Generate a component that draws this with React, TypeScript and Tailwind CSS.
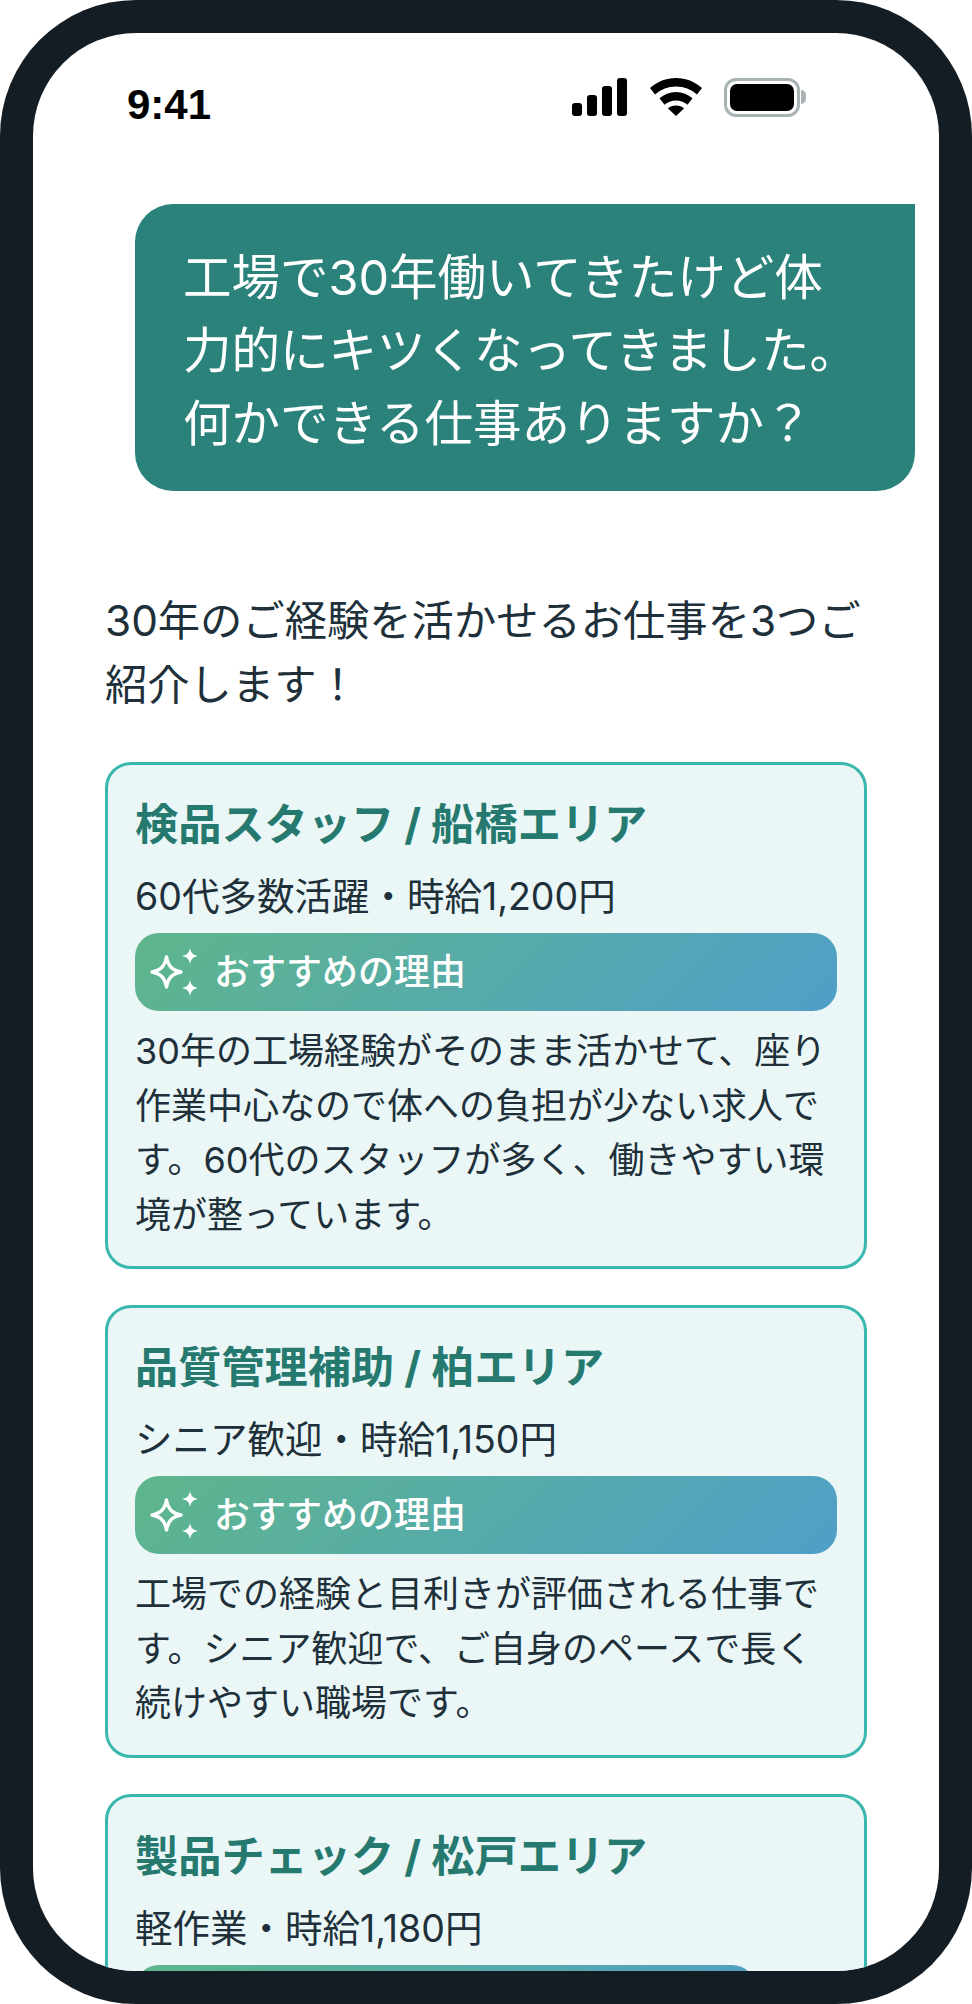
const font = { fontFamily: 'Inter, "Noto Sans CJK JP", sans-serif' };

interface Job {
  title: string;
  meta: string;
  reason: string[];
  bandClass: string;
  clipped?: boolean;
}

const jobs: Job[] = [
  {
    title: "検品スタッフ / 船橋エリア",
    meta: "60代多数活躍・時給1,200円",
    reason: [
      "30年の工場経験がそのまま活かせて、座り",
      "作業中心なので体への負担が少ない求人で",
      "す。60代のスタッフが多く、働きやすい環",
      "境が整っています。",
    ],
    bandClass: "w-full",
  },
  {
    title: "品質管理補助 / 柏エリア",
    meta: "シニア歓迎・時給1,150円",
    reason: [
      "工場での経験と目利きが評価される仕事で",
      "す。シニア歓迎で、ご自身のペースで長く",
      "続けやすい職場です。",
    ],
    bandClass: "w-full",
  },
  {
    // only the top edge of the band shows above the bezel
    title: "製品チェック / 松戸エリア",
    meta: "軽作業・時給1,180円",
    reason: [],
    bandClass: "w-[621px]",
    clipped: true,
  },
];

function Sparkles() {
  return (
    <svg viewBox="0 0 50 50" className="w-[50px] h-[50px] shrink-0" fill="none">
      <path d="M17.500 10c1.700 9 5.500 13.300 14.500 15-9 1.700-12.800 6-14.500 15-1.700-9-5.500-13.300-14.500-15 9-1.700 12.800-6 14.500-15z" stroke="#fff" strokeWidth="3.400" strokeLinejoin="round" />
      <path d="M41 1c1 5.200 3 7 8 8-5 1-7 2.800-8 8-1-5.200-3-7-8-8 5-1 7-2.800 8-8z" fill="#fff" />
      <path d="M41 33c1 5.200 3 7 8 8-5 1-7 2.800-8 8-1-5.200-3-7-8-8 5-1 7-2.800 8-8z" fill="#fff" />
    </svg>
  );
}

function StatusBar() {
  return (
    <div className="flex items-center justify-between h-[108px] pt-[10px] pl-[94px] pr-[133px] shrink-0 box-content">
      <span className="mt-[16px] text-[42px] font-bold leading-none text-black" style={{ fontFamily: '"Liberation Sans", sans-serif' }}>
        9:41
      </span>
      <div className="flex items-center gap-[22px]">
        <svg viewBox="0 0 56 38" className="w-[56px] h-[38px]" fill="#000">
          <rect x="0" y="25" width="10" height="13" rx="3" />
          <rect x="15" y="17" width="10" height="21" rx="3" />
          <rect x="30" y="8" width="10" height="30" rx="3" />
          <rect x="45" y="0" width="10" height="38" rx="3" />
        </svg>
        <svg viewBox="0 0 52 38" className="w-[52px] h-[38px]" fill="#000">
          <path d="M26 0C16 0 7.500 3.500 0 10l5 6.500C11 11.300 18 8.500 26 8.500s15 2.800 21 8l5-6.500C44.500 3.500 36 0 26 0z" />
          <path d="M26 14c-6.500 0-12 2.300-16.500 6.300l5 6.400c3-2.700 7-4.300 11.500-4.300s8.500 1.600 11.500 4.300l5-6.400C38 16.300 32.500 14 26 14z" />
          <path d="M26 27.500c-3.500 0-6 1.200-8 3L26 38l8-7.500c-2-1.800-4.500-3-8-3z" />
        </svg>
        <div className="flex items-center">
          <div className="w-[76px] h-[39px] rounded-[12px] border-[3px] border-[#a9b3b5] p-[3px]">
            <div className="w-full h-full rounded-[7px] bg-black" />
          </div>
          <div className="w-[5px] h-[14px] rounded-r-full bg-[#a9b3b5] ml-[1px]" />
        </div>
      </div>
    </div>
  );
}

function JobCard({ job }: { job: Job }) {
  return (
    <div className="shrink-0 rounded-[26px] border-[3px] border-[#3ab8ad] bg-[#ebf7f7] px-[27px] pt-[31px] pb-[24px]">
      <div className="text-[43.200px] leading-[56px] font-bold text-[#25796e] whitespace-nowrap">{job.title}</div>
      <div className="mt-[21px] text-[37.500px] leading-[48px] text-[#20303a] whitespace-nowrap">{job.meta}</div>
      <div
        className={`${job.bandClass} mt-[12px] h-[78px] rounded-[24px] bg-[linear-gradient(135deg,#5eb68b,#4f9fc8)] flex items-center gap-[15px] pl-[14px]`}
      >
        {!job.clipped && (
          <>
            <Sparkles />
            <span className="text-[36px] font-medium text-white whitespace-nowrap">おすすめの理由</span>
          </>
        )}
      </div>
      <div className="mt-[13px] text-[36px] leading-[54.500px] text-[#20303a] whitespace-nowrap">
        {job.reason.map((line) => (
          <div key={line}>{line}</div>
        ))}
      </div>
    </div>
  );
}

export default function App() {
  return (
    <div className="w-[972px] h-[2004px] bg-[#151d24] rounded-[136px] p-[33px]" style={font}>
      <div className="w-[906px] h-[1938px] bg-white rounded-[103px] overflow-hidden flex flex-col">
        <StatusBar />
        <div className="mt-[53px] ml-[102px] mr-[24px] h-[287px] shrink-0 rounded-[38px] rounded-tr-none bg-[#2b827b] flex flex-col justify-center pt-[6px] pl-[48px] text-[48.500px] leading-[73px] text-white whitespace-nowrap">
          <div>工場で30年働いてきたけど体</div>
          <div>力的にキツくなってきました。</div>
          <div>何かできる仕事ありますか？</div>
        </div>
        <div className="mt-[98px] ml-[72px] text-[42.300px] leading-[64px] text-[#20303a] whitespace-nowrap">
          <div>30年のご経験を活かせるお仕事を3つご</div>
          <div>紹介します！</div>
        </div>
        <div className="mt-[45px] mx-[72px] flex flex-col gap-[36px]">
          {jobs.map((job) => (
            <JobCard key={job.title} job={job} />
          ))}
        </div>
      </div>
    </div>
  );
}
